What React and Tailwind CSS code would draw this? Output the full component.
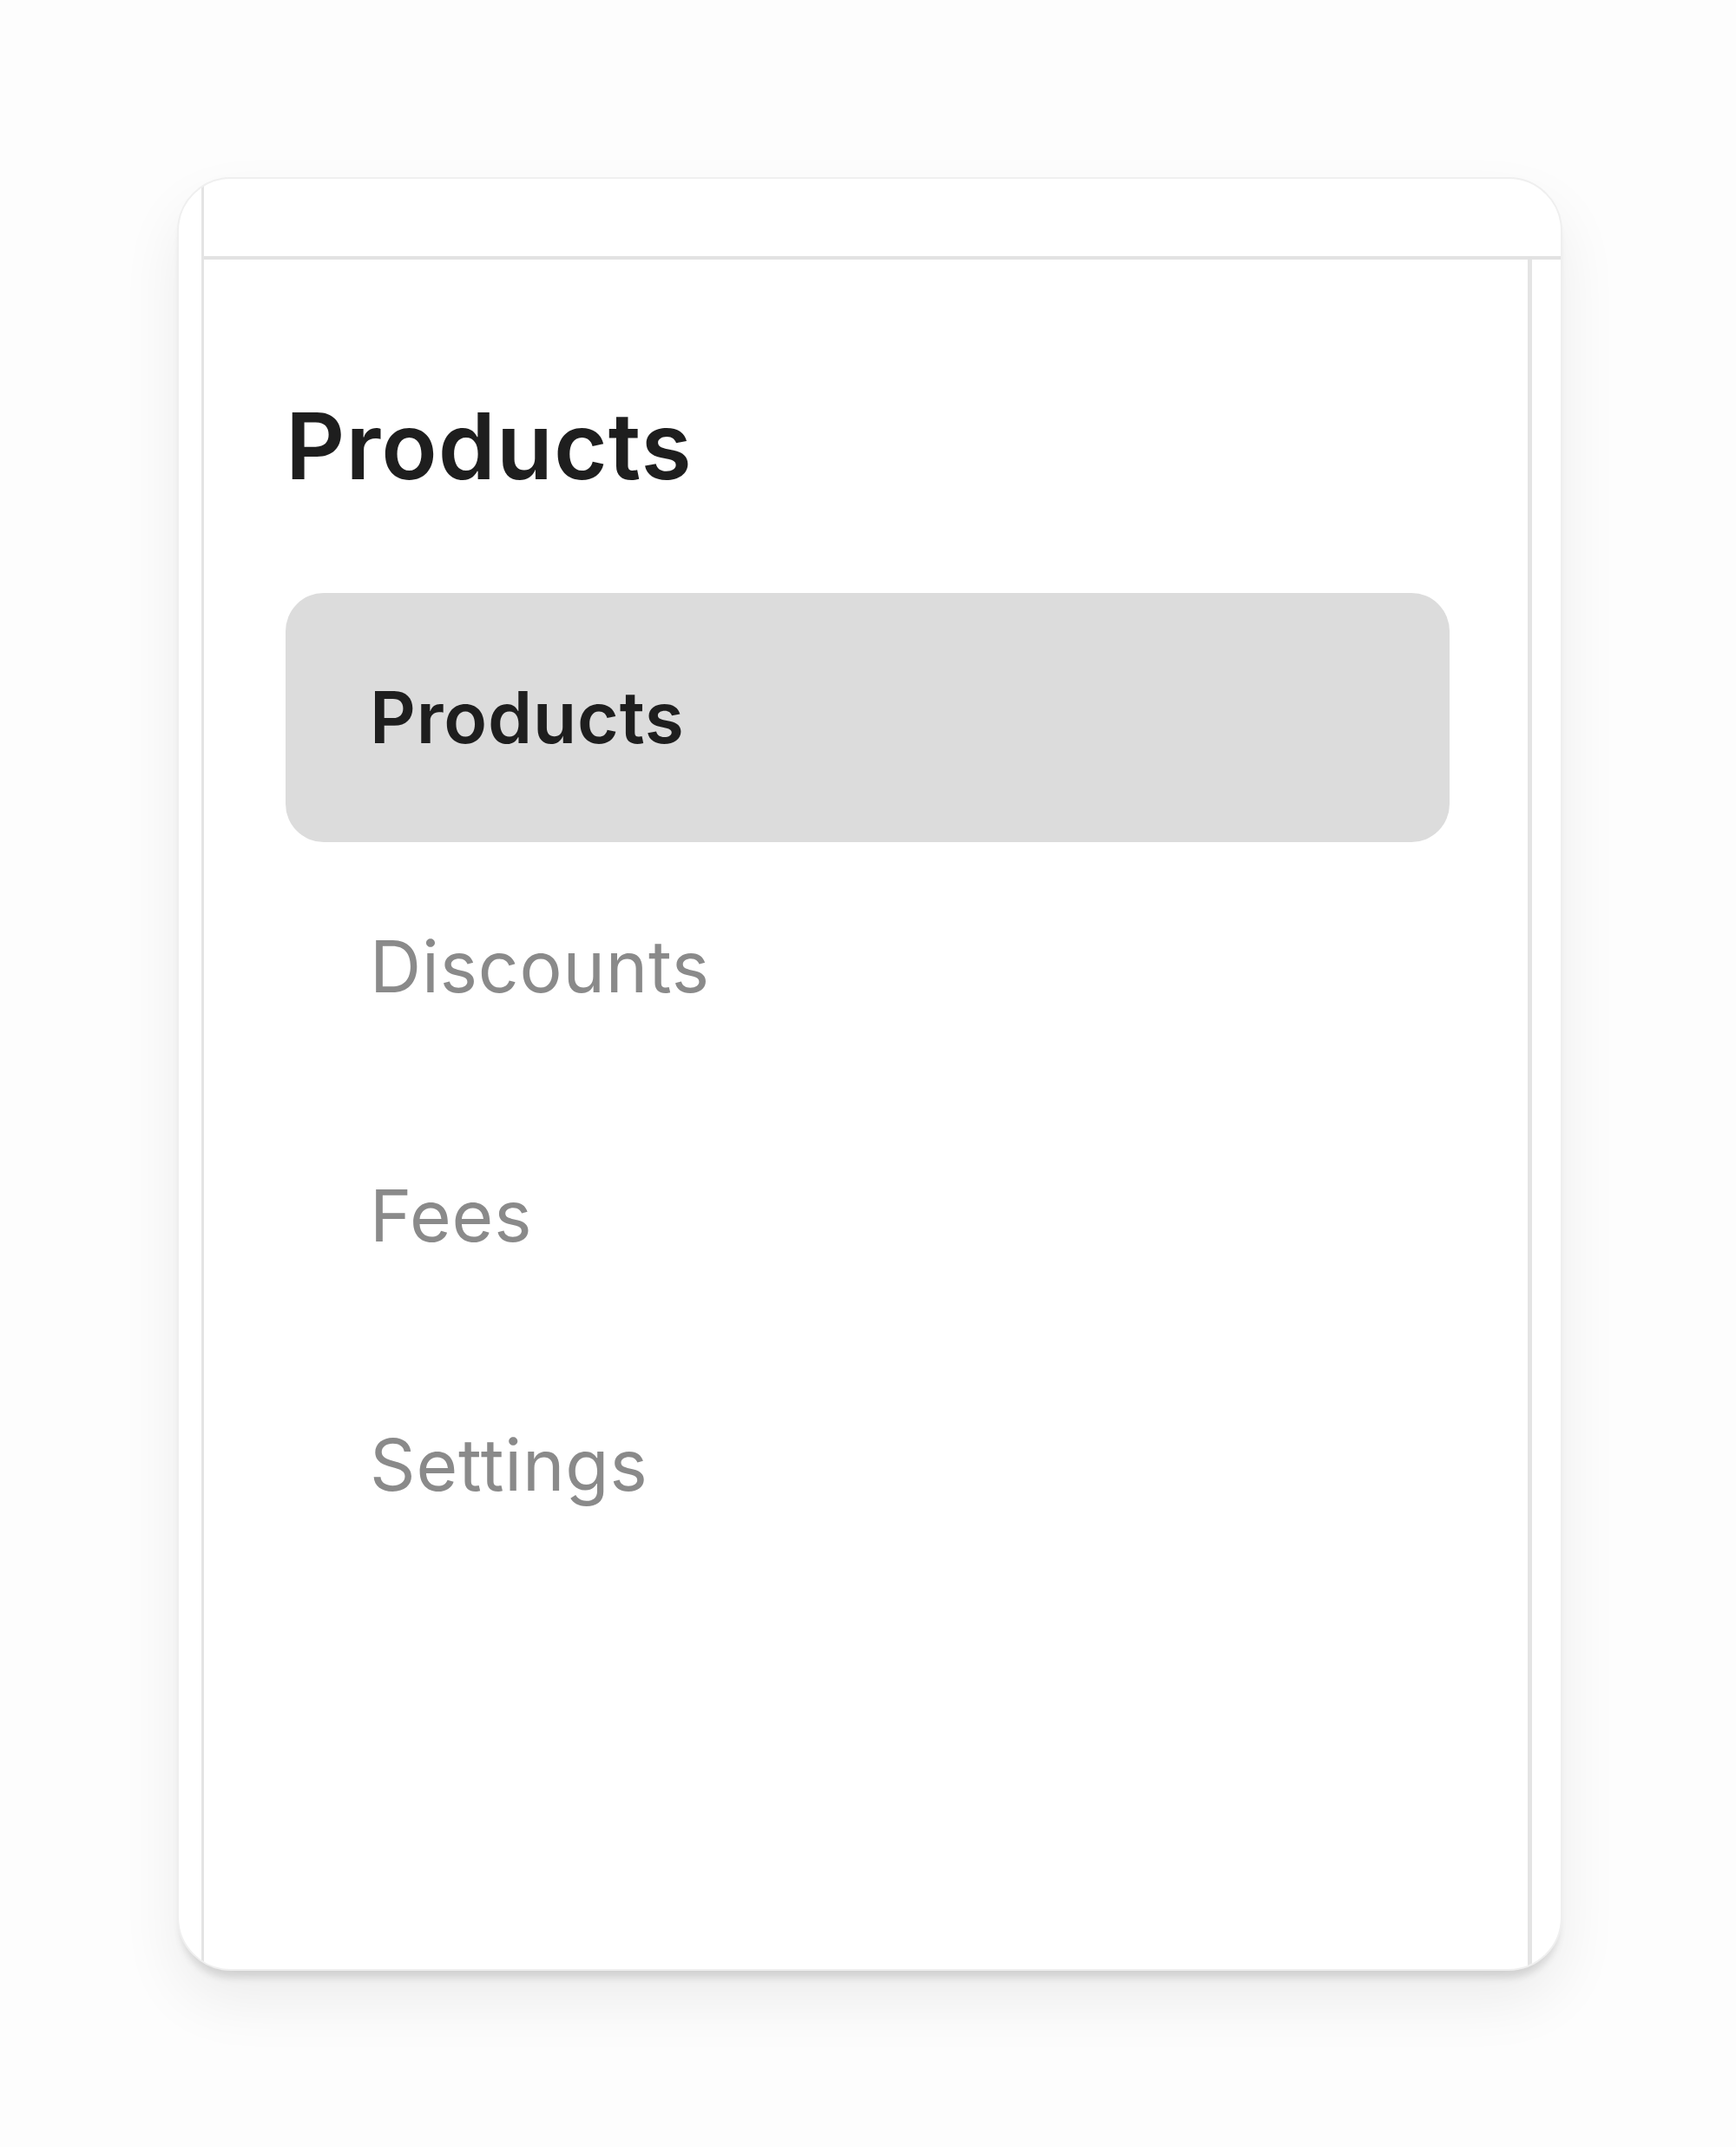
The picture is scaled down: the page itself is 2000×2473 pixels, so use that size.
export default function App() {
  const items = [
    { label: "Products", active: true },
    { label: "Discounts" },
    { label: "Fees" },
    { label: "Settings" },
  ];

  return (
    <div className="min-h-[2473px] w-[2000px] bg-[#fdfdfd] pl-[204px] pt-[204px] font-['Inter',sans-serif]">
      <div className="h-[2066px] w-[1596px] overflow-hidden rounded-[62px] border-2 border-[#efefef] bg-white shadow-[0_12px_8px_-4px_rgba(0,0,0,0.12),0_34px_70px_rgba(0,0,0,0.07)]">
        <div className="ml-[26px] flex h-full flex-col border-l-[3px] border-[#e4e4e4]">
          {/* top bar */}
          <div className="h-[93px] shrink-0 border-b-[4px] border-[#e2e2e2]" />

          {/* sidebar */}
          <div className="mr-[33px] flex-1 border-r-[5px] border-[#e4e4e4] pl-[94px] pr-[90px] pt-[151px]">
            <h2 className="text-[106px] font-semibold leading-[1.21] tracking-[0.01em] text-[#1e1e1e]">
              Products
            </h2>
            <nav className="mt-[105px] flex flex-col">
              {items.map((item) => (
                <a
                  key={item.label}
                  href="#"
                  className={
                    item.active
                      ? "flex h-[287px] items-center rounded-[44px] bg-[#dcdcdc] pl-[97px] text-[82px] font-semibold tracking-[0.01em] text-[#1e1e1e]"
                      : "flex h-[287px] items-center rounded-[44px] pl-[97px] text-[82px] font-normal tracking-[0.01em] text-[#8a8a8a]"
                  }
                >
                  {item.label}
                </a>
              ))}
            </nav>
          </div>
        </div>
      </div>
    </div>
  );
}
